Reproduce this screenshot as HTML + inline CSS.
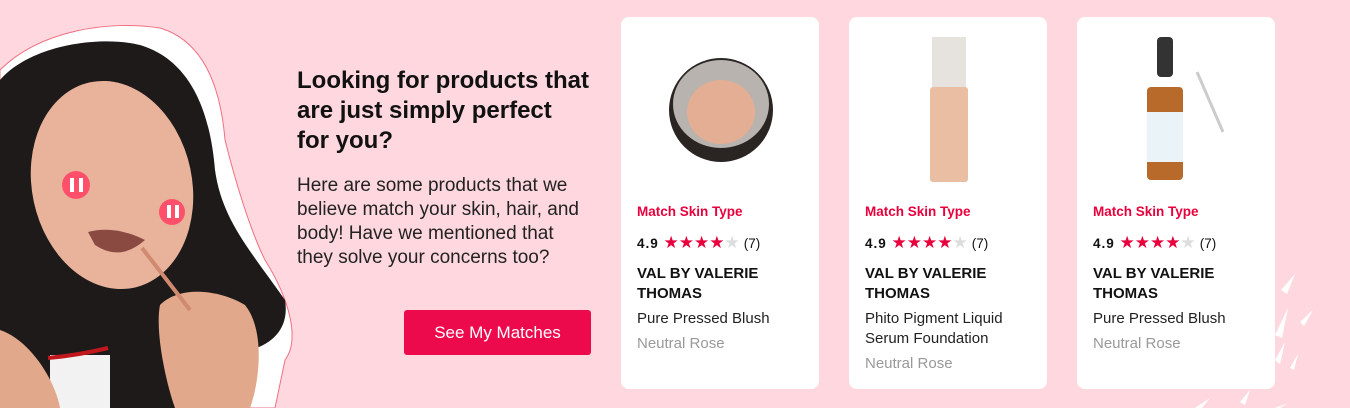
<!DOCTYPE html>
<html><head><style>
*{margin:0;padding:0;box-sizing:border-box}
body{width:1350px;height:408px;background:#ffd8df;font-family:"Liberation Sans",Arial,sans-serif;position:relative;overflow:hidden;color:#111}
.h{position:absolute;left:297px;top:66px;width:310px;font-size:24px;font-weight:bold;line-height:30px}
.p{position:absolute;left:297px;top:174px;width:310px;font-size:19px;line-height:24px;color:#222}
.btn{position:absolute;left:404px;top:310px;width:187px;height:45px;background:#ec0a4c;border-radius:3px;color:#fff;font-size:17px;text-align:center;line-height:45px}
.card{position:absolute;top:17px;width:198px;height:372px;background:#fff;border-radius:8px}
.m{position:absolute;left:16px;top:187px;color:#e8003d;font-weight:bold;font-size:13.5px}
.r{position:absolute;left:16px;top:216px;font-size:13.5px;font-weight:bold;letter-spacing:1px}
.r span{color:#e8003d;font-size:17px;letter-spacing:0;font-weight:normal}
.r span i{color:#ddd;font-style:normal}
.r b{font-weight:normal;letter-spacing:0;margin-left:4px}
.b{position:absolute;left:16px;top:247px;font-weight:bold;font-size:15px;line-height:20px;width:170px}
.n{position:absolute;left:16px;top:292px;font-size:15px;line-height:20px;width:175px;color:#222}
.n em{font-style:normal;color:#999;display:block;margin-top:5px}
</style></head><body>
<svg style="position:absolute;left:0;top:0" width="300" height="408">
<path d="M0 70 C40 30 110 20 160 28 C200 40 220 80 225 140 C235 180 250 230 265 260 C290 300 300 340 285 360 L275 408 L0 408Z" fill="#fff" stroke="#f07080" stroke-width="1"/>
<path d="M0 80 C30 45 100 35 140 45 C190 60 210 110 215 170 C222 220 250 250 285 300 C290 330 270 345 250 350 L250 408 L0 408Z" fill="#1e1a1a"/>
<ellipse cx="112" cy="185" rx="80" ry="105" fill="#e8b39a" transform="rotate(-12 112 185)"/>
<rect x="50" y="355" width="60" height="53" fill="#f2f2f2"/>
<path d="M48 358 Q80 355 108 348" stroke="#c0181c" stroke-width="4" fill="none"/>
<path d="M160 305 C180 285 220 290 245 305 C265 330 260 380 250 408 L175 408 C165 380 155 330 160 305Z" fill="#e2a88c"/>
<path d="M0 330 C30 340 55 380 60 408 L0 408Z" fill="#e2a88c"/>
<path d="M88 232 Q115 225 145 240 Q120 262 95 245Z" fill="#8a4a42"/>
<line x1="142" y1="248" x2="190" y2="310" stroke="#d08a70" stroke-width="4"/>
<circle cx="76" cy="185" r="14" fill="#ff4f6a"/><rect x="70" y="178" width="4" height="14" fill="#fff"/><rect x="79" y="178" width="4" height="14" fill="#fff"/>
<circle cx="172" cy="212" r="13" fill="#ff4f6a"/><rect x="167" y="205" width="4" height="13" fill="#fff"/><rect x="175" y="205" width="4" height="13" fill="#fff"/>
</svg>
<div class="h">Looking for products that<br>are just simply perfect<br>for you?</div>
<div class="p">Here are some products that we<br>believe match your skin, hair, and<br>body! Have we mentioned that<br>they solve your concerns too?</div>
<div class="btn">See My Matches</div>

<div class="card" style="left:621px">
<svg style="position:absolute;left:45px;top:35px" width="110" height="110"><ellipse cx="55" cy="58" rx="52" ry="52" fill="#2a2523"/><ellipse cx="55" cy="52" rx="48" ry="44" fill="#b8b3ae"/><ellipse cx="55" cy="60" rx="34" ry="32" fill="#e4ae94"/></svg>
<div class="m">Match Skin Type</div><div class="r">4.9 <span>★★★★<i>★</i></span><b>(7)</b></div>
<div class="b">VAL BY VALERIE THOMAS</div><div class="n">Pure Pressed Blush<em>Neutral Rose</em></div></div>

<div class="card" style="left:849px">
<svg style="position:absolute;left:80px;top:20px" width="40" height="150"><rect x="3" y="0" width="34" height="55" fill="#e6e2de"/><rect x="1" y="50" width="38" height="95" rx="3" fill="#e9bea2"/></svg>
<div class="m">Match Skin Type</div><div class="r">4.9 <span>★★★★<i>★</i></span><b>(7)</b></div>
<div class="b">VAL BY VALERIE THOMAS</div><div class="n">Phito Pigment Liquid<br>Serum Foundation<em>Neutral Rose</em></div></div>

<div class="card" style="left:1077px">
<svg style="position:absolute;left:60px;top:15px" width="100" height="150"><rect x="20" y="5" width="16" height="40" rx="4" fill="#333"/><rect x="10" y="55" width="36" height="93" rx="4" fill="#b86a2a"/><rect x="10" y="80" width="36" height="50" fill="#eaf4f8"/><line x1="60" y1="40" x2="86" y2="100" stroke="#ccc" stroke-width="3"/></svg>
<div class="m">Match Skin Type</div><div class="r">4.9 <span>★★★★<i>★</i></span><b>(7)</b></div>
<div class="b">VAL BY VALERIE THOMAS</div><div class="n">Pure Pressed Blush<em>Neutral Rose</em></div></div>

<svg style="position:absolute;left:1180px;top:260px" width="170" height="148" fill="#fff">
<path d="M101 30 L115 14 L107 34Z"/><path d="M120 62 L133 50 L124 66Z"/><path d="M95 75 L108 48 L102 78Z"/><path d="M110 108 L118 94 L114 110Z"/><path d="M95 100 L105 82 L100 104Z"/><path d="M15 148 L30 138 L22 148Z"/><path d="M60 142 L70 130 L65 145Z"/><path d="M95 148 L108 143 L100 148Z"/>
</svg>
</body></html>
